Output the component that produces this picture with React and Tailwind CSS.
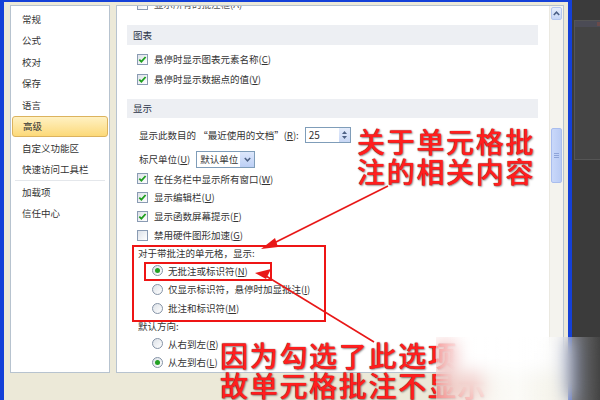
import React from 'react'

const CJK = "font-['Noto_Sans_CJK_SC','Noto_Sans',sans-serif]"
const NAV = ['常规', '公式', '校对', '保存', '语言', '高级', '自定义功能区', '快速访问工具栏']
const NAV2 = ['加载项', '信任中心']
const RED = "text-[#ff1e1e] text-[28px] leading-[30px] tracking-[1.7px] font-medium whitespace-nowrap [text-shadow:0_0_1px_#700,1px_1px_2px_rgba(0,0,0,0.45)]"

function Check({ on }) {
  return (
    <span className="w-[11px] h-[11px] border border-[#8a9bb3] bg-gradient-to-br from-[#dde2e9] to-white flex items-center justify-center shrink-0">
      {on && (
        <svg width="9" height="9" viewBox="0 0 9 9">
          <path d="M1.3 4.6 L3.4 6.7 L7.6 2" stroke="#1f9f1f" strokeWidth="1.8" fill="none" />
        </svg>
      )}
    </span>
  )
}

function Radio({ on }) {
  return (
    <span className="w-[11px] h-[11px] rounded-full border border-[#8593a6] bg-gradient-to-br from-[#dce1e7] to-white flex items-center justify-center shrink-0">
      {on && <span className="w-[5px] h-[5px] rounded-full bg-[#22a022]" />}
    </span>
  )
}

const Lbl = ({ t, k, tail = '' }) => <span>{t}(<u>{k}</u>){tail}</span>

function CheckRow({ on, t, k, h = 'h-[19px]' }) {
  return (
    <div className={`${h} flex items-center ml-[20px] gap-[6px]`}>
      <Check on={on} />
      <Lbl t={t} k={k} />
    </div>
  )
}

function RadioRow({ on, t, k }) {
  return (
    <div className="h-[19px] flex items-center ml-[35px] gap-[5px]">
      <Radio on={on} />
      <Lbl t={t} k={k} />
    </div>
  )
}

const Band = ({ children, className = '' }) => (
  <div className={`h-[20px] ml-[10px] mr-[11px] bg-[#edeff3] flex items-center pl-[6px] text-[#2b3548] ${className}`}>{children}</div>
)

export default function App() {
  return (
    <div className={`relative w-[600px] h-[400px] overflow-hidden flex bg-[#3b3b3b] text-[9.5px] text-[#333] ${CJK}`}>
      <div className="w-[572px] h-full border-l-[4px] border-r-[4px] border-t-[2px] border-[#1440d8] bg-[#ece9d8] flex gap-[6px] pl-[6px] pr-[4px] pt-[3px]">
        {/* nav */}
        <div className="w-[100px] h-[368px] shrink-0 bg-white border border-[#b7c3cf] pt-[2px] flex flex-col">
          {NAV.map(n => (
            <div key={n} className={`h-[21.5px] mx-[1px] flex items-center pl-[10px] ${n === '高级' ? 'bg-gradient-to-b from-[#fff1c2] to-[#fcd978] border border-[#dcb35e] rounded-[3px]' : ''}`}>{n}</div>
          ))}
          <div className="h-px mx-[4px] bg-[#e4e7eb]" />
          {NAV2.map(n => (
            <div key={n} className="h-[21.5px] mx-[1px] flex items-center pl-[10px]">{n}</div>
          ))}
        </div>

        {/* main */}
        <div className="w-[448px] h-[368px] shrink-0 bg-white border border-[#b7c3cf] flex">
          <div className="flex-1 overflow-hidden flex flex-col">
            <div className="h-[19px] -mt-[11px] flex items-center ml-[20px] gap-[6px] text-[#555]">
              <Check />
              <span>显示所有的批注框(A)</span>
            </div>
            <Band className="mt-[11px]">图表</Band>
            <div className="mt-[5px]">
              <CheckRow on t="悬停时显示图表元素名称" k="C" h="h-[20px]" />
              <CheckRow on t="悬停时显示数据点的值" k="V" h="h-[20px]" />
            </div>
            <Band className="mt-[9px]">显示</Band>
            <div className="mt-[7px] h-[20px] flex items-center ml-[22px] gap-[6px]">
              <span>显示此数目的 “最近使用的文档”(<u>R</u>):</span>
              <div className="w-[46px] h-[16px] border border-[#7f9db9] flex bg-white">
                <span className="flex-1 pl-[3px] leading-[14px] text-[10px]">25</span>
                <div className="w-[11px] h-full bg-gradient-to-b from-[#e3ebfb] to-[#c8d7f5] flex flex-col items-center justify-center gap-[2px]">
                  <svg width="5" height="3" viewBox="0 0 5 3"><path d="M0 3 L2.5 0 L5 3 Z" fill="#4d6185" /></svg>
                  <svg width="5" height="3" viewBox="0 0 5 3"><path d="M0 0 L2.5 3 L5 0 Z" fill="#4d6185" /></svg>
                </div>
              </div>
            </div>
            <div className="mt-[4.5px] h-[20px] flex items-center ml-[22px] gap-[6px]">
              <Lbl t="标尺单位" k="U" />
              <div className="w-[59px] h-[17px] border border-[#7f9db9] flex items-center bg-white">
                <span className="flex-1 pl-[3px]">默认单位</span>
                <div className="w-[14px] h-full bg-gradient-to-b from-[#dde7fb] to-[#bccff5] flex items-center justify-center">
                  <svg width="7" height="5" viewBox="0 0 7 5"><path d="M0.8 1 L3.5 3.8 L6.2 1" stroke="#4d6185" strokeWidth="1.5" fill="none" /></svg>
                </div>
              </div>
            </div>
            <CheckRow on t="在任务栏中显示所有窗口" k="W" />
            <CheckRow on t="显示编辑栏" k="U" />
            <CheckRow on t="显示函数屏幕提示" k="F" />
            <CheckRow t="禁用硬件图形加速" k="G" />
            <div className="h-[17px] flex items-center ml-[21px]">对于带批注的单元格，显示:</div>
            <RadioRow on t="无批注或标识符" k="N" />
            <RadioRow t="仅显示标识符，悬停时加显批注" k="I" />
            <RadioRow t="批注和标识符" k="M" />
            <div className="h-[17px] flex items-center ml-[21px]">默认方向:</div>
            <RadioRow t="从右到左" k="R" />
            <RadioRow on t="从左到右" k="L" />
          </div>
          {/* scrollbar */}
          <div className="w-[14px] h-full bg-[#f4f3ee] border-l border-[#ebe9e1] pt-[1px] px-[1px] flex flex-col">
            <div className="h-[13px] rounded-[2px] border border-[#b4c6ee] bg-gradient-to-b from-[#e6eefc] to-[#c6d6f6] flex items-center justify-center">
              <svg width="7" height="5" viewBox="0 0 7 5"><path d="M0.8 4 L3.5 1.2 L6.2 4" stroke="#4a5f86" strokeWidth="1.6" fill="none" /></svg>
            </div>
            <div className="mt-[108px] h-[55px] rounded-[2px] border border-[#a9bdee] bg-gradient-to-r from-[#c9d8fa] to-[#b9cbf4] flex flex-col items-center justify-center gap-[1px]">
              <span className="w-[5px] h-px bg-[#8ea4d8]" />
              <span className="w-[5px] h-px bg-[#8ea4d8]" />
              <span className="w-[5px] h-px bg-[#8ea4d8]" />
            </div>
          </div>
        </div>
      </div>

      {/* dimmed window behind, right side */}
      <div className="absolute left-[574px] top-[20px] w-[30px] h-[140px] border border-[#555] bg-[#444]">
        <div className="h-[6px] bg-[#4b4b55] flex justify-end pr-[2px]">
          <span className="w-[4px] h-[4px] mt-[1px] bg-[#6a4a4a]" />
        </div>
      </div>

      {/* red boxes */}
      <div className="absolute left-[132px] top-[245px] w-[194px] h-[77px] border-2 border-[#ee1515]" />
      <div className="absolute left-[144px] top-[262px] w-[128px] h-[19px] border-2 border-[#ee1515]" />

      {/* arrows */}
      <svg className="absolute left-0 top-0 pointer-events-none" width="600" height="400" viewBox="0 0 600 400">
        <line x1="388" y1="186" x2="272" y2="244" stroke="#e81818" strokeWidth="1.6" />
        <path d="M261 249 L275 238 L278 247 Z" fill="#e81818" />
        <line x1="374" y1="342" x2="266" y2="276" stroke="#e81818" strokeWidth="1.6" />
        <path d="M255 273 L271 269 L266 279 Z" fill="#e81818" />
      </svg>

      {/* red annotations */}
      <div className={`absolute left-[357px] top-[126px] ${RED}`}>
        <div>关于单元格批</div>
        <div>注的相关内容</div>
      </div>
      <div className={`absolute left-[220px] top-[340px] ${RED}`}>
        <div>因为勾选了此选项</div>
        <div>故单元格批注不显示</div>
      </div>

      {/* blurred watermark patch */}
      <div className="absolute left-[436px] top-[337px] w-[164px] h-[63px] backdrop-blur-[9px] bg-gradient-to-r from-white/45 via-white/80 to-white/5" />
    </div>
  )
}
